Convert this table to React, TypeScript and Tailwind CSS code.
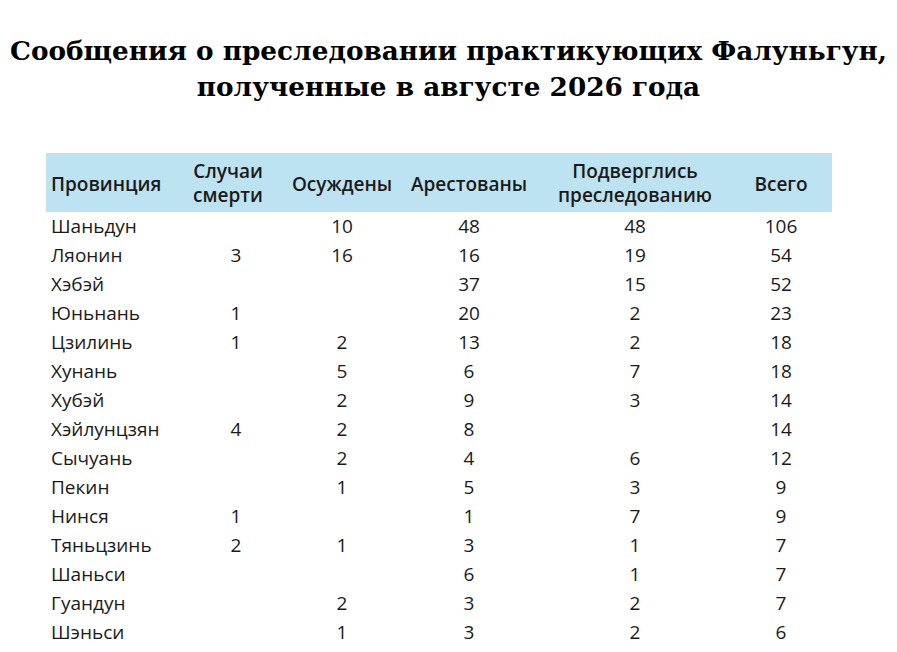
import React from 'react';

type Row = {
  province: string;
  deaths?: number;
  sentenced?: number;
  arrested?: number;
  harassed?: number;
  total: number;
};

const rows: Row[] = [
  { province: 'Шаньдун', sentenced: 10, arrested: 48, harassed: 48, total: 106 },
  { province: 'Ляонин', deaths: 3, sentenced: 16, arrested: 16, harassed: 19, total: 54 },
  { province: 'Хэбэй', arrested: 37, harassed: 15, total: 52 },
  { province: 'Юньнань', deaths: 1, arrested: 20, harassed: 2, total: 23 },
  { province: 'Цзилинь', deaths: 1, sentenced: 2, arrested: 13, harassed: 2, total: 18 },
  { province: 'Хунань', sentenced: 5, arrested: 6, harassed: 7, total: 18 },
  { province: 'Хубэй', sentenced: 2, arrested: 9, harassed: 3, total: 14 },
  { province: 'Хэйлунцзян', deaths: 4, sentenced: 2, arrested: 8, total: 14 },
  { province: 'Сычуань', sentenced: 2, arrested: 4, harassed: 6, total: 12 },
  { province: 'Пекин', sentenced: 1, arrested: 5, harassed: 3, total: 9 },
  { province: 'Нинся', deaths: 1, arrested: 1, harassed: 7, total: 9 },
  { province: 'Тяньцзинь', deaths: 2, sentenced: 1, arrested: 3, harassed: 1, total: 7 },
  { province: 'Шаньси', arrested: 6, harassed: 1, total: 7 },
  { province: 'Гуандун', sentenced: 2, arrested: 3, harassed: 2, total: 7 },
  { province: 'Шэньси', sentenced: 1, arrested: 3, harassed: 2, total: 6 },
  { province: 'Хэйнань', arrested: 3, harassed: 2, total: 5 },
];

const App: React.FC = () => {
  return (
    <div className="h-screen overflow-hidden bg-white text-black">
      <h1
        className="pt-[33px] text-center text-[26.3px] leading-[36px] font-bold"
        style={{ fontFamily: '"DejaVu Serif", "Liberation Serif", serif' }}
      >
        Сообщения о преследовании практикующих Фалуньгун,
        <br />
        полученные в августе 2026 года
      </h1>

      <div className="mt-[48px] ml-[46px] w-[786px] text-[19px] text-[#1a1a1a]" style={{ fontFamily: '"Open Sans", Lato, sans-serif' }}>
        <div className="flex h-[59px] items-center bg-[#bde3f3] font-semibold leading-[24px]">
          <div className="w-[140px] pl-[5px] pt-[3px]">Провинция</div>
          <div className="w-[100px] pr-4 text-center">Случаи<br />смерти</div>
          <div className="w-[112px] pt-[3px] text-center">Осуждены</div>
          <div className="w-[142px] pt-[3px] text-center">Арестованы</div>
          <div className="w-[190px] text-center">Подверглись<br />преследованию</div>
          <div className="w-[102px] pt-[3px] text-center">Всего</div>
        </div>

        {rows.map((r) => (
          <div key={r.province} className="flex h-[29px] items-center">
            <div className="w-[140px] pl-[5px]">{r.province}</div>
            <div className="w-[100px] text-center">{r.deaths ?? ''}</div>
            <div className="w-[112px] text-center">{r.sentenced ?? ''}</div>
            <div className="w-[142px] text-center">{r.arrested ?? ''}</div>
            <div className="w-[190px] text-center">{r.harassed ?? ''}</div>
            <div className="w-[102px] text-center">{r.total}</div>
          </div>
        ))}
      </div>
    </div>
  );
};

export default App;
